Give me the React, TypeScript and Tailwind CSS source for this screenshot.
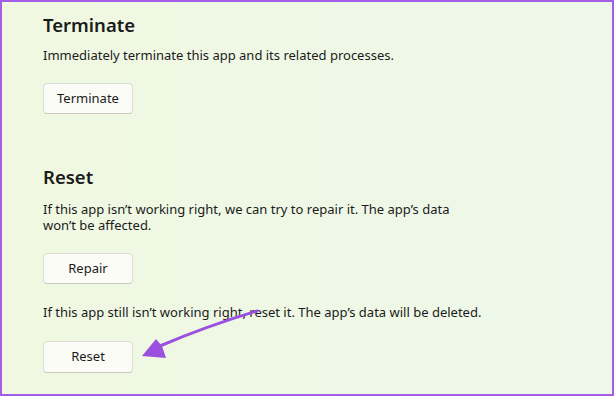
export default function App() {
  const font = { fontFamily: '"Noto Sans", "Open Sans", sans-serif' };
  return (
    <div
      className="relative w-[614px] h-[396px] overflow-hidden border-2 border-[#a35de6] bg-gradient-to-r from-[#f0f8e1] to-[#eef8ea] text-[#1b1b1b]"
      style={font}
    >
      <div className="pl-[41px] pt-[9px]">
        <h2 className="text-[18.5px] font-semibold leading-[28px]">Terminate</h2>
        <p className="mt-[6px] text-[13px] leading-[20px]">
          Immediately terminate this app and its related processes.
        </p>
        <button className="mt-[18px] w-[90px] h-[31px] rounded-[4px] border border-[#dcdcd6] border-b-[#c9c9c2] bg-[#fbfcf6] text-[13px]">
          Terminate
        </button>

        <h2 className="mt-[49px] text-[18.5px] font-semibold leading-[28px]">Reset</h2>
        <p className="mt-[10px] w-[425px] text-[13px] leading-[16px]">
          If this app isn’t working right, we can try to repair it. The app’s data won’t be affected.
        </p>
        <button className="mt-[20px] w-[90px] h-[31px] rounded-[4px] border border-[#dcdcd6] border-b-[#c9c9c2] bg-[#fbfcf6] text-[13px]">
          Repair
        </button>
        <p className="mt-[18px] text-[13px] leading-[20px]">
          If this app still isn’t working right, reset it. The app’s data will be deleted.
        </p>
        <button className="mt-[19px] w-[90px] h-[32px] rounded-[4px] border border-[#dcdcd6] border-b-[#c9c9c2] bg-[#fbfcf6] text-[13px]">
          Reset
        </button>
      </div>

      <svg className="absolute left-0 top-0" width="614" height="396" viewBox="0 0 614 396">
        <path d="M255 309 Q205 324 158 344" stroke="#9b51e0" strokeWidth="3" fill="none" strokeLinecap="round" />
        <path d="M140 354 L154 337 L160 344 L164 356 Z" fill="#9b51e0" />
      </svg>
    </div>
  );
}
